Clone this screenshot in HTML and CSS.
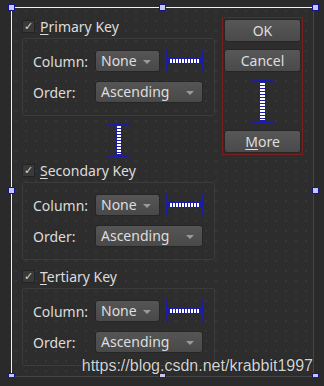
FILE: index.html
```html
<!DOCTYPE html>
<html lang="en">
<head>
    <meta charset="UTF-8">
    <meta name="viewport" content="width=device-width, initial-scale=1.0">
    <title>Sort Dialog</title>
    <link rel="stylesheet" href="styles.css">
</head>
<body>
    <div class="form">
        <div class="left">
            <!-- Primary -->
            <div class="check-row"><span class="check">✓</span><span><u>P</u>rimary Key</span></div>
            <div class="group">
                <span class="label">Column:</span>
                <div class="field">
                    <div class="combo short">None</div>
                    <svg class="hspring" width="38" height="22" viewBox="0 0 38 22">
                        <rect x="0" y="0" width="2" height="22" fill="#1c1ca6"/>
                        <rect x="36" y="0" width="2" height="22" fill="#1c1ca6"/>
                        <rect x="2" y="8" width="34" height="6" fill="#1c1ca6"/>
                        <line x1="4" y1="11" x2="34" y2="11" stroke="#fff" stroke-width="4" stroke-dasharray="2 1"/>
                    </svg>
                </div>
                <span class="label">Order:</span>
                <div class="field"><div class="combo long">Ascending</div></div>
            </div>

            <div class="vgap">
                <svg width="22" height="34" viewBox="0 0 22 34">
                    <rect x="0" y="0" width="22" height="2" fill="#1c1ca6"/>
                    <rect x="0" y="32" width="22" height="2" fill="#1c1ca6"/>
                    <rect x="8" y="2" width="6" height="30" fill="#1c1ca6"/>
                    <line x1="11" y1="3" x2="11" y2="31" stroke="#fff" stroke-width="4" stroke-dasharray="2 1"/>
                </svg>
            </div>

            <!-- Secondary -->
            <div class="check-row"><span class="check">✓</span><span><u>S</u>econdary Key</span></div>
            <div class="group">
                <span class="label">Column:</span>
                <div class="field">
                    <div class="combo short">None</div>
                    <svg class="hspring" width="38" height="22" viewBox="0 0 38 22">
                        <rect x="0" y="0" width="2" height="22" fill="#1c1ca6"/>
                        <rect x="36" y="0" width="2" height="22" fill="#1c1ca6"/>
                        <rect x="2" y="8" width="34" height="6" fill="#1c1ca6"/>
                        <line x1="4" y1="11" x2="34" y2="11" stroke="#fff" stroke-width="4" stroke-dasharray="2 1"/>
                    </svg>
                </div>
                <span class="label">Order:</span>
                <div class="field"><div class="combo long">Ascending</div></div>
            </div>

            <!-- Tertiary -->
            <div class="check-row third"><span class="check">✓</span><span><u>T</u>ertiary Key</span></div>
            <div class="group">
                <span class="label">Column:</span>
                <div class="field">
                    <div class="combo short">None</div>
                    <svg class="hspring" width="38" height="22" viewBox="0 0 38 22">
                        <rect x="0" y="0" width="2" height="22" fill="#1c1ca6"/>
                        <rect x="36" y="0" width="2" height="22" fill="#1c1ca6"/>
                        <rect x="2" y="8" width="34" height="6" fill="#1c1ca6"/>
                        <line x1="4" y1="11" x2="34" y2="11" stroke="#fff" stroke-width="4" stroke-dasharray="2 1"/>
                    </svg>
                </div>
                <span class="label">Order:</span>
                <div class="field"><div class="combo long">Ascending</div></div>
            </div>
        </div>

        <div class="buttons">
            <div class="btn">OK</div>
            <div class="btn">Cancel</div>
            <div class="bspacer">
                <svg width="21" height="43" viewBox="0 0 21 43">
                    <rect x="0" y="0" width="21" height="2" fill="#1c1ca6"/>
                    <rect x="0" y="41" width="21" height="2" fill="#1c1ca6"/>
                    <rect x="7" y="2" width="7" height="39" fill="#1c1ca6"/>
                    <line x1="10.5" y1="3" x2="10.5" y2="40" stroke="#fff" stroke-width="5" stroke-dasharray="2 1"/>
                </svg>
            </div>
            <div class="btn"><span><u>M</u>ore</span></div>
        </div>

        <!-- selection handles -->
        <span class="handle" style="left:-4px;top:-4px"></span>
        <span class="handle" style="left:147px;top:-4px"></span>
        <span class="handle" style="left:300px;top:-4px"></span>
        <span class="handle" style="left:-4px;top:179px"></span>
        <span class="handle" style="left:300px;top:179px"></span>
        <span class="handle" style="left:-4px;top:365px"></span>
        <span class="handle" style="left:147px;top:365px"></span>
        <span class="handle" style="left:300px;top:365px"></span>

        <div class="watermark">https://blog.csdn.net/krabbit1997</div>
    </div>
</body>
</html>
```

FILE: styles.css
```css
body {
    margin: 0;
    background-color: #2a2a2a;
    font-family: "Noto Sans", sans-serif;
    font-size: 14px;
    color: #dcdcdc;
}

.form {
    position: relative;
    box-sizing: border-box;
    margin: 7px 0 0 11px;
    width: 303px;
    height: 370px;
    padding-left: 10px;
    border-top: 1px solid #f0f0f0;
    border-left: 1px solid #f0f0f0;
    border-right: 1px solid #454545;
    border-bottom: 1px solid #454545;
    background-color: #2d2d2d;
    background-image: radial-gradient(circle at 1px 1px, #3d3d3d 0.6px, transparent 0.9px);
    background-size: 10px 10px;
    background-position: 3px 2px;
    display: flex;
    align-items: flex-start;
    gap: 7px;
}

.left {
    width: 193px;
    margin-top: 12px;
}

/* checkbox rows */
.check-row {
    display: flex;
    align-items: center;
    gap: 5px;
    height: 13px;
    margin-bottom: 5px;
    white-space: nowrap;
}

.check-row.third {
    margin-top: 10px;
}

.check {
    box-sizing: border-box;
    width: 13px;
    height: 13px;
    border: 1px solid #232323;
    background-color: #3a3a3a;
    color: #d6d6d6;
    font-family: "DejaVu Sans", sans-serif;
    font-size: 11px;
    line-height: 11px;
    text-align: center;
}

u {
    text-decoration-thickness: 1px;
    text-underline-offset: 2px;
}

/* group boxes */
.group {
    box-sizing: border-box;
    height: 78px;
    border: 1px solid #3b3b3b;
    border-radius: 2px;
    padding: 11px 0 12px 10px;
    display: grid;
    grid-template-columns: 62px auto;
    row-gap: 9px;
    align-items: center;
}

.field {
    display: flex;
    align-items: center;
    gap: 6px;
}

.combo {
    position: relative;
    box-sizing: border-box;
    height: 22px;
    padding-left: 5px;
    border: 1px solid #262626;
    border-radius: 3px;
    background: linear-gradient(#555555, #494949);
    color: #dedede;
    line-height: 20px;
}

.combo.short {
    width: 65px;
}

.combo.long {
    width: 108px;
}

.combo::after {
    content: "";
    position: absolute;
    right: 8px;
    top: 9px;
    border-left: 4px solid transparent;
    border-right: 4px solid transparent;
    border-top: 4px solid #9a9a9a;
}

.vgap {
    height: 48px;
    display: flex;
    justify-content: center;
    align-items: center;
}

/* right button column */
.buttons {
    box-sizing: border-box;
    width: 81px;
    height: 138px;
    margin-top: 9px;
    padding: 1px;
    border: 1px solid #7a1e1e;
    display: flex;
    flex-direction: column;
    gap: 7px;
}

.btn {
    box-sizing: border-box;
    height: 23px;
    border: 1px solid #262626;
    border-radius: 3px;
    background: linear-gradient(#575757, #4a4a4a);
    color: #dedede;
    display: flex;
    align-items: center;
    justify-content: center;
}

.bspacer {
    flex: 1;
    display: flex;
    justify-content: center;
    align-items: center;
}

.handle {
    position: absolute;
    box-sizing: border-box;
    width: 7px;
    height: 7px;
    border: 1px solid #16168c;
    background-color: #c6c6f2;
}

.watermark {
    position: absolute;
    right: 0;
    bottom: 1px;
    font-family: "Liberation Sans", Arial, sans-serif;
    font-size: 16px;
    color: #d4d4d4;
    text-shadow: 0 0 1px #000;
    white-space: nowrap;
}
```
